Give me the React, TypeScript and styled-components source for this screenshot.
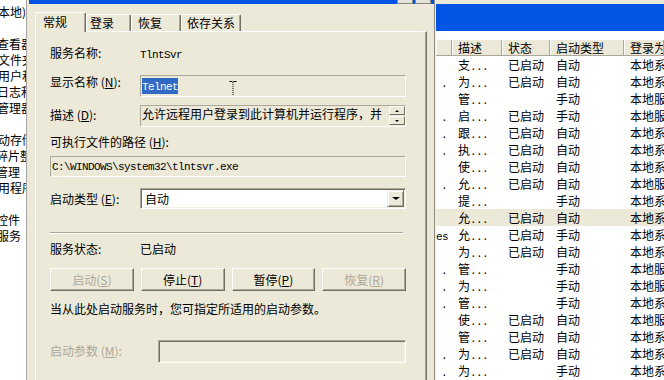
import React from "react";
import styled, { createGlobalStyle } from "styled-components";

const GlobalStyle = createGlobalStyle`
  html, body {
    margin: 0;
    padding: 0;
  }
  body {
    width: 664px;
    height: 380px;
    overflow: hidden;
    background: #fff;
    color: #000;
    font-family: "Noto Sans CJK SC", "Liberation Sans", sans-serif;
    font-size: 12px;
  }
  * {
    box-sizing: border-box;
  }
`;

const Screen = styled.div`
  display: flex;
  width: 664px;
  height: 380px;
  overflow: hidden;
`;

/* left tree, mostly hidden by the dialog */
const Tree = styled.div`
  flex: none;
  width: 27px;
  padding-top: 4px;
  background: #fff;
  border-right: 1px solid #a5a5a5;
  overflow: hidden;
`;

const TreeLine = styled.div<{ $shift: number }>`
  height: 16px;
  line-height: 16px;
  white-space: nowrap;
  margin-left: ${(p) => p.$shift}px;
`;

/* the properties dialog */
const Dialog = styled.div`
  flex: none;
  width: 408px;
  padding-left: 8px;
  background: #ece9d8;
  border-right: 1px solid #8d8b80;
`;

const TitleStrip = styled.div`
  display: flex;
  justify-content: flex-end;
  gap: 2px;
  height: 4px;
  margin-left: -6px;
  padding-right: 3px;
  background: #0054e3;
`;

const TitleButton = styled.div`
  width: 16px;
  height: 4px;
  background: #e4e2da;
  border: 1px solid #8a887e;
  border-top: none;
`;

const TabRow = styled.div`
  display: flex;
  align-items: flex-end;
  margin-top: 8px;
`;

const Tab = styled.div<{ $active?: boolean; $w: number; $pad: number }>`
  position: relative;
  z-index: ${(p) => (p.$active ? 2 : 1)};
  width: ${(p) => p.$w}px;
  height: ${(p) => (p.$active ? 20 : 17)}px;
  margin-bottom: ${(p) => (p.$active ? -1 : 0)}px;
  padding-left: ${(p) => p.$pad}px;
  padding-top: ${(p) => (p.$active ? 1 : 0)}px;
  line-height: 16px;
  background: #ece9d8;
  border-top: 1px solid #fff;
  border-left: 1px solid #fff;
  border-right: 1px solid #716f64;
  box-shadow: inset -1px 0 #aca899;
  border-radius: 2px 2px 0 0;
  white-space: nowrap;
`;

const Panel = styled.div`
  position: relative;
  z-index: 1;
  width: 392px;
  height: 360px;
  padding: 13px 0 0 14px;
  border-top: 1px solid #fff;
  border-left: 1px solid #fff;
  border-right: 1px solid #716f64;
  box-shadow: inset -1px 0 #aca899;
`;

const Field = styled.div<{ $mt: number }>`
  display: flex;
  align-items: flex-start;
  width: 356px;
  margin-top: ${(p) => p.$mt}px;
`;

const Label = styled.div<{ $dy?: number; $disabled?: boolean; $w?: number }>`
  flex: none;
  width: ${(p) => p.$w ?? 90}px;
  margin-top: ${(p) => p.$dy ?? 0}px;
  line-height: 16px;
  white-space: nowrap;
  color: ${(p) => (p.$disabled ? "#aca899" : "#000")};
`;

const Text = styled.div<{ $mt?: number }>`
  margin-top: ${(p) => p.$mt ?? 0}px;
  line-height: 16px;
  white-space: nowrap;
`;

const Mono = styled.span`
  font-family: "Liberation Mono", "DejaVu Sans Mono", monospace;
  font-size: 11px;
  letter-spacing: -0.6px;
`;

const StaticBox = styled.div<{ $h: number }>`
  position: relative;
  display: flex;
  align-items: flex-start;
  flex: 1;
  height: ${(p) => p.$h}px;
  padding: 0 0 0 1px;
  border-top: 1px solid #aca899;
  border-left: 1px solid #aca899;
  border-bottom: 1px solid #fff;
  border-right: 1px solid #fff;
  white-space: nowrap;
  overflow: hidden;
`;

const BoxText = styled.div<{ $mt: number }>`
  flex: 1;
  margin-top: ${(p) => p.$mt}px;
  line-height: 16px;
`;

const Selection = styled.span`
  display: inline-block;
  line-height: 13px;
  background: #316ac5;
  color: #fff;
`;

const IBeam = styled.svg`
  position: absolute;
  left: 88px;
  top: 5px;
`;

const SpinCol = styled.div`
  display: flex;
  flex-direction: column;
  gap: 1px;
  margin: 0 0 0 0;
`;

const SpinBtn = styled.div`
  display: flex;
  align-items: center;
  justify-content: center;
  width: 16px;
  height: 9px;
  background: #ece9d8;
  border-top: 1px solid #fff;
  border-left: 1px solid #fff;
  border-right: 1px solid #716f64;
  border-bottom: 1px solid #716f64;
`;

const Arrow = styled.div<{ $up?: boolean; $size: number }>`
  width: 0;
  height: 0;
  border-left: ${(p) => p.$size}px solid transparent;
  border-right: ${(p) => p.$size}px solid transparent;
  ${(p) =>
    p.$up
      ? `border-bottom: ${Math.ceil(p.$size / 1.5)}px solid #000;`
      : `border-top: ${Math.ceil(p.$size / 1.5)}px solid #000;`}
`;

const PathBox = styled.div`
  display: flex;
  align-items: center;
  width: 356px;
  height: 21px;
  margin-top: 6px;
  padding-left: 1px;
  border-top: 1px solid #aca899;
  border-left: 1px solid #aca899;
  border-bottom: 1px solid #fff;
  border-right: 1px solid #fff;
  white-space: nowrap;
`;

const Sunken = styled.div<{ $white?: boolean; $h: number }>`
  display: flex;
  align-items: center;
  flex: 1;
  height: ${(p) => p.$h}px;
  padding: 0 1px 0 4px;
  background: ${(p) => (p.$white ? "#fff" : "#ece9d8")};
  border-top: 1px solid #aca899;
  border-left: 1px solid #aca899;
  border-bottom: 1px solid #fff;
  border-right: 1px solid #fff;
  box-shadow: inset 1px 1px #716f64, inset -1px -1px #f1efe2;
`;

const DropButton = styled.div`
  display: flex;
  align-items: center;
  justify-content: center;
  width: 17px;
  height: 17px;
  margin-left: auto;
  background: #ece9d8;
  border-top: 1px solid #f1efe2;
  border-left: 1px solid #f1efe2;
  border-right: 1px solid #716f64;
  border-bottom: 1px solid #716f64;
  box-shadow: inset 1px 1px #fff, inset -1px -1px #aca899;
`;

const Separator = styled.div`
  width: 353px;
  height: 2px;
  margin-top: 23px;
  border-top: 1px solid #aca899;
  border-bottom: 1px solid #fff;
`;

const ButtonRow = styled.div`
  display: flex;
  gap: 7px;
  width: 356px;
  margin-top: 11px;
`;

const Button = styled.div<{ $disabled?: boolean }>`
  display: flex;
  flex: 1;
  align-items: center;
  justify-content: center;
  height: 23px;
  background: #ece9d8;
  color: ${(p) => (p.$disabled ? "#aca899" : "#000")};
  border-top: 1px solid #fff;
  border-left: 1px solid #fff;
  border-right: 1px solid #716f64;
  border-bottom: 1px solid #716f64;
  box-shadow: inset -1px -1px #aca899;
  white-space: nowrap;
`;

/* the services list behind the dialog */
const ListWin = styled.div`
  display: flex;
  flex-direction: column;
  flex: 1;
  min-width: 0;
  background: #fff;
  border-left: 1px solid #f1efe2;
`;

const ListTop = styled.div`
  height: 4px;
  background: #ece9d8;
`;

const BlueBand = styled.div`
  height: 27px;
  background: #0055e5;
`;

const ListGap = styled.div`
  height: 9px;
`;

const cols = "16px 50px 48px 74px 1fr";

const HeaderRow = styled.div`
  display: grid;
  grid-template-columns: ${cols};
  height: 16px;
  background: #ece9d8;
  border-bottom: 1px solid #aca899;
`;

const HeaderCell = styled.div`
  padding-left: 5px;
  line-height: 15px;
  border-left: 1px solid #fff;
  border-right: 1px solid #aca899;
  white-space: nowrap;
  overflow: hidden;
`;

const ListRow = styled.div<{ $hl?: boolean }>`
  display: grid;
  grid-template-columns: ${cols};
  height: 17px;
  line-height: 17px;
  background: ${(p) => (p.$hl ? "#ece9d8" : "transparent")};
`;

const Cell = styled.div`
  padding-left: 6px;
  white-space: nowrap;
  overflow: hidden;
`;

const LeadCell = styled.div`
  padding-right: 5px;
  text-align: right;
  white-space: nowrap;
  overflow: hidden;
`;

const treeLines = [
  { t: "本地)", s: -2 },
  { t: "", s: 0 },
  { t: "查看器", s: -3 },
  { t: "文件夹", s: -2 },
  { t: "用户和", s: -2 },
  { t: "日志和", s: -3 },
  { t: "管理器", s: -3 },
  { t: "", s: 0 },
  { t: "动存储", s: -2 },
  { t: "碎片整", s: -4 },
  { t: "管理", s: -4 },
  { t: "用程序", s: -2 },
  { t: "", s: 0 },
  { t: "控件", s: -4 },
  { t: "服务", s: -3 },
];

type Service = { lead: string; d: string; s: string; t: string; l: string; hl?: boolean };

const services: Service[] = [
  { lead: "", d: "支", s: "已启动", t: "自动", l: "本地系统" },
  { lead: ".", d: "为", s: "已启动", t: "自动", l: "本地系统" },
  { lead: "", d: "管", s: "", t: "手动", l: "本地服务" },
  { lead: ".", d: "启", s: "已启动", t: "手动", l: "本地服务" },
  { lead: ".", d: "跟", s: "已启动", t: "自动", l: "本地系统" },
  { lead: ".", d: "执", s: "已启动", t: "自动", l: "本地系统" },
  { lead: "", d: "使", s: "已启动", t: "自动", l: "本地系统" },
  { lead: ".", d: "允", s: "已启动", t: "自动", l: "本地服务" },
  { lead: "", d: "提", s: "", t: "手动", l: "本地系统" },
  { lead: "", d: "允", s: "已启动", t: "自动", l: "本地系统", hl: true },
  { lead: "es", d: "允", s: "已启动", t: "手动", l: "本地系统" },
  { lead: "", d: "为", s: "已启动", t: "自动", l: "本地系统" },
  { lead: ".", d: "管", s: "", t: "手动", l: "本地服务" },
  { lead: ".", d: "为", s: "", t: "手动", l: "本地服务" },
  { lead: ".", d: "管", s: "", t: "手动", l: "本地系统" },
  { lead: "", d: "使", s: "已启动", t: "自动", l: "本地服务" },
  { lead: "", d: "管", s: "已启动", t: "自动", l: "本地系统" },
  { lead: ".", d: "为", s: "已启动", t: "自动", l: "本地系统" },
  { lead: ".", d: "为", s: "", t: "手动", l: "本地系统" },
];

const App = () => {
  return (
    <>
      <GlobalStyle />
      <Screen>
        <Tree>
          {treeLines.map((line, i) => (
            <TreeLine key={i} $shift={line.s}>
              {line.t}
            </TreeLine>
          ))}
        </Tree>

        <Dialog>
          <TitleStrip>
            <TitleButton />
            <TitleButton />
          </TitleStrip>
          <TabRow>
            <Tab $active $w={51} $pad={7}>常规</Tab>
            <Tab $w={45} $pad={3}>登录</Tab>
            <Tab $w={50} $pad={6}>恢复</Tab>
            <Tab $w={60} $pad={5}>依存关系</Tab>
          </TabRow>
          <Panel>
            <Field $mt={0}>
              <Label>服务名称:</Label>
              <Text>
                <Mono>TlntSvr</Mono>
              </Text>
            </Field>

            <Field $mt={12}>
              <Label $dy={-1}>
                显示名称 (<u>N</u>):
              </Label>
              <StaticBox $h={22}>
                <BoxText $mt={1}>
                  <Selection>
                    <Mono>Telnet</Mono>
                  </Selection>
                </BoxText>
                <IBeam width="8" height="17" viewBox="0 0 8 17">
                  <path d="M0.5 0.5h3M4.5 0.5h3M0.5 16.5h3M4.5 16.5h3" stroke="#000" />
                  <path d="M4 1v15" stroke="#000" strokeDasharray="1 1" />
                </IBeam>
              </StaticBox>
            </Field>

            <Field $mt={8}>
              <Label $dy={2}>
                描述 (<u>D</u>):
              </Label>
              <StaticBox $h={22}>
                <BoxText $mt={0}>允许远程用户登录到此计算机并运行程序，并</BoxText>
                <SpinCol>
                  <SpinBtn>
                    <Arrow $up $size={2} />
                  </SpinBtn>
                  <SpinBtn>
                    <Arrow $size={2} />
                  </SpinBtn>
                </SpinCol>
              </StaticBox>
            </Field>

            <Text $mt={7}>
              可执行文件的路径 (<u>H</u>):
            </Text>
            <PathBox>
              <Mono>C:\WINDOWS\system32\tlntsvr.exe</Mono>
            </PathBox>

            <Field $mt={11}>
              <Label $dy={3}>
                启动类型 (<u>E</u>):
              </Label>
              <Sunken $white $h={21}>
                <span>自动</span>
                <DropButton>
                  <Arrow $size={4} />
                </DropButton>
              </Sunken>
            </Field>

            <Separator />

            <Field $mt={7}>
              <Label>服务状态:</Label>
              <Text>已启动</Text>
            </Field>

            <ButtonRow>
              <Button $disabled>
                启动(<u>S</u>)
              </Button>
              <Button>
                停止(<u>T</u>)
              </Button>
              <Button>
                暂停(<u>P</u>)
              </Button>
              <Button $disabled>
                恢复(<u>R</u>)
              </Button>
            </ButtonRow>

            <Text $mt={10}>当从此处启动服务时，您可指定所适用的启动参数。</Text>

            <Field $mt={23}>
              <Label $dy={3} $w={108} $disabled>
                启动参数 (<u>M</u>):
              </Label>
              <Sunken $h={23} />
            </Field>
          </Panel>
        </Dialog>

        <ListWin>
          <ListTop />
          <BlueBand />
          <ListGap />
          <HeaderRow>
            <HeaderCell />
            <HeaderCell>描述</HeaderCell>
            <HeaderCell>状态</HeaderCell>
            <HeaderCell>启动类型</HeaderCell>
            <HeaderCell>登录为</HeaderCell>
          </HeaderRow>
          {services.map((row, i) => (
            <ListRow key={i} $hl={row.hl}>
              <LeadCell>
                <Mono>{row.lead}</Mono>
              </LeadCell>
              <Cell>
                {row.d}
                <Mono>...</Mono>
              </Cell>
              <Cell>{row.s}</Cell>
              <Cell>{row.t}</Cell>
              <Cell>{row.l}</Cell>
            </ListRow>
          ))}
        </ListWin>
      </Screen>
    </>
  );
};

export default App;
